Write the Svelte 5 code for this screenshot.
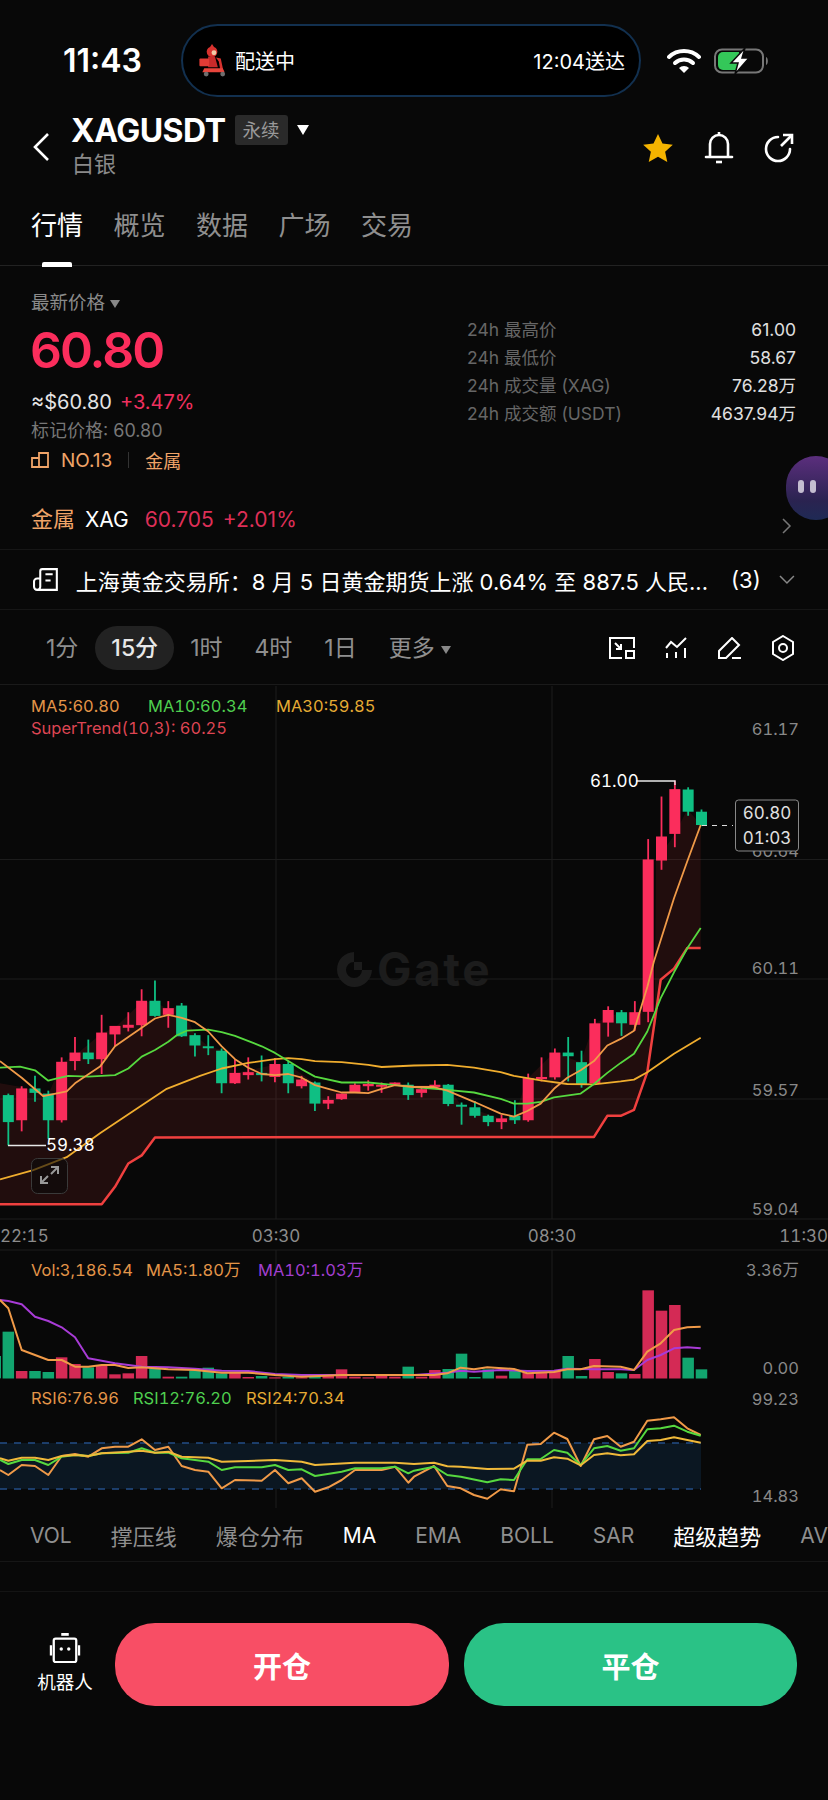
<script>
  const tabs = ['行情', '概览', '数据', '广场', '交易'];
  const stats = [
    ['24h 最高价', '61.00'],
    ['24h 最低价', '58.67'],
    ['24h 成交量 (XAG)', '76.28万'],
    ['24h 成交额 (USDT)', '4637.94万']
  ];
  const intervals = ['1分', '15分', '1时', '4时', '1日'];
  const indicators = [
    ['VOL', 0], ['撑压线', 0], ['爆仓分布', 0], ['MA', 1], ['EMA', 0],
    ['BOLL', 0], ['SAR', 0], ['超级趋势', 1], ['AV', 0]
  ];
  const isCjk = (s) => /[^\x00-\x7f]/.test(s);

  const UP = '#fb2d5c';
  const DOWN = '#0fbf83';

  // values were read off the reference: y in main-chart units, converted below
  const my = (v) => 680 + v / 2.703;
  const sy = (v) => 1240 + v / 3;
  const cx = (i) => 8.33 + 13.33 * i;

  const candles = [
    [0, 1118, 1122, 1195, 1258], [1, 1098, 1104, 1190, 1220], [0, 1070, 1104, 1116, 1140], [0, 1110, 1118, 1190, 1240],
    [1, 1020, 1032, 1190, 1196], [1, 965, 1007, 1030, 1055], [0, 972, 1007, 1025, 1038], [1, 905, 953, 1025, 1065],
    [1, 935, 935, 958, 990], [1, 898, 932, 940, 950], [1, 836, 867, 933, 963], [0, 812, 867, 908, 910],
    [1, 868, 887, 905, 940], [0, 873, 880, 963, 965], [0, 955, 960, 988, 1018], [0, 960, 990, 995, 1014],
    [0, 996, 1002, 1090, 1117], [1, 1025, 1062, 1090, 1092], [1, 1020, 1060, 1068, 1080], [0, 1015, 1062, 1068, 1085],
    [1, 1022, 1038, 1073, 1087], [0, 1030, 1038, 1090, 1117], [1, 1070, 1080, 1098, 1104], [0, 1085, 1088, 1145, 1165],
    [1, 1125, 1135, 1145, 1160], [1, 1118, 1118, 1133, 1135], [1, 1090, 1094, 1115, 1116], [1, 1082, 1092, 1098, 1110],
    [1, 1088, 1094, 1098, 1116], [1, 1088, 1088, 1094, 1096], [0, 1088, 1094, 1122, 1135], [1, 1100, 1106, 1116, 1128],
    [1, 1082, 1094, 1100, 1102], [0, 1092, 1094, 1146, 1152], [0, 1142, 1148, 1150, 1202], [0, 1138, 1155, 1178, 1183],
    [0, 1175, 1178, 1195, 1206], [1, 1175, 1185, 1195, 1214], [0, 1136, 1178, 1190, 1200], [1, 1064, 1076, 1190, 1194],
    [1, 1020, 1073, 1079, 1085], [1, 996, 1007, 1074, 1080], [0, 965, 1007, 1017, 1085], [0, 1002, 1033, 1092, 1102],
    [1, 916, 928, 1090, 1094], [1, 882, 892, 926, 964], [0, 892, 898, 928, 962], [1, 868, 898, 932, 948],
    [1, 430, 485, 897, 925], [1, 315, 423, 488, 513], [1, 272, 295, 416, 452], [0, 290, 296, 356, 367], [0, 350, 356, 392, 395]
  ];

  const volTops = [
    [0, 275], [1, 393], [0, 393], [0, 396], [1, 352], [1, 372], [0, 382], [1, 376], [1, 403], [1, 400], [1, 348],
    [0, 385], [1, 410], [0, 410], [0, 392], [0, 383], [0, 400], [1, 395], [1, 411], [0, 408], [1, 412], [0, 410],
    [1, 412], [0, 408], [1, 404], [1, 388], [1, 410], [1, 412], [1, 404], [1, 410], [0, 380], [1, 410], [1, 390],
    [0, 387], [0, 341], [0, 411], [0, 388], [1, 407], [0, 390], [1, 398], [1, 395], [1, 392], [0, 348], [0, 408],
    [1, 357], [1, 396], [0, 400], [1, 402], [1, 151], [1, 212], [1, 195], [0, 353], [0, 388]
  ];

  // left half points are in zoom x (x/3), right half are offset by 1242
  const R = 1242;
  const r = (pts) => pts.map(([x, y]) => [x + R, y]);
  const path = (pts, toY) => pts.map(([x, y]) => `${(x / 3).toFixed(1)},${toY(y).toFixed(1)}`).join(' ');

  const ma5 = [[0, 1030], [65, 1075], [130, 1125], [200, 1112], [225, 1090], [300, 1045], [345, 990], [385, 965], [425, 940], [465, 915], [505, 905], [545, 913], [585, 925], [625, 950], [665, 990], [705, 1025], [745, 1048], [785, 1065], [825, 1068], [865, 1065], [905, 1075], [945, 1095], [985, 1105], [1025, 1115], [1065, 1115], [1105, 1117], [1145, 1105], [1185, 1095], ...r([[0, 1100], [60, 1100], [100, 1110], [180, 1140], [260, 1172], [300, 1180], [340, 1165], [380, 1145], [420, 1105], [460, 1075], [500, 1055], [540, 1030], [580, 988], [620, 970], [660, 948], [700, 830], [720, 760], [780, 590], [820, 490], [860, 392]])];
  const ma10 = [[0, 1048], [60, 1045], [105, 1055], [145, 1083], [165, 1078], [205, 1070], [265, 1072], [345, 1068], [385, 1050], [425, 1018], [465, 1000], [505, 978], [530, 960], [560, 948], [625, 945], [665, 952], [705, 962], [785, 990], [825, 1008], [865, 1030], [905, 1052], [945, 1072], [1025, 1088], [1105, 1088], [1185, 1095], ...r([[0, 1100], [100, 1108], [180, 1115], [260, 1132], [300, 1145], [340, 1145], [380, 1140], [420, 1128], [500, 1118], [540, 1092], [580, 1062], [620, 1035], [660, 1010], [700, 950], [740, 860], [780, 790], [820, 725], [860, 670]])];
  const ma30 = [[0, 1350], [100, 1325], [200, 1290], [300, 1225], [400, 1165], [500, 1105], [600, 1070], [665, 1050], [745, 1035], [825, 1025], [865, 1022], [905, 1025], [945, 1030], [1025, 1033], [1105, 1040], [1145, 1046], ...r([[0, 1042], [100, 1040], [180, 1048], [260, 1060], [300, 1070], [380, 1082], [460, 1092], [540, 1093], [620, 1085], [660, 1080], [700, 1060], [780, 1010], [860, 967]])];
  const trend = [[0, 1417], [305, 1417], [345, 1370], [385, 1307], [425, 1285], [465, 1237], ...r([[0, 1235], [540, 1235], [580, 1178], [620, 1178], [660, 1162], [700, 1060], [740, 810], [780, 780], [820, 724], [860, 724]])];
  const trendTop = [[0, 1090], [65, 1100], [145, 1120], [185, 1035], [225, 1015], [305, 955], [345, 940], [425, 870], [465, 870], [505, 890], [545, 880], [585, 960], [625, 990], [665, 1000], [705, 1062], [825, 1040], [865, 1040], [945, 1090], [1025, 1118], [1105, 1092], ...r([[0, 1095], [100, 1095], [140, 1148], [260, 1185], [300, 1180], [340, 1078], [420, 1007], [500, 1033], [540, 928], [620, 898], [700, 897], [722, 897], [726, 488], [780, 420], [820, 350], [860, 390]])];
  const trendFill = path([...trendTop, ...[...trend].reverse()], my);

  const volMa5 = [[0, 180], [25, 205], [65, 330], [105, 345], [145, 360], [185, 360], [225, 380], [265, 380], [305, 375], [345, 375], [385, 384], [425, 382], [505, 388], [585, 390], [665, 398], [745, 398], [825, 405], [905, 410], [1025, 405], ...r([[0, 405], [60, 405], [100, 400], [140, 383], [180, 388], [220, 382], [300, 387], [340, 400], [420, 396], [460, 388], [500, 388], [540, 378], [620, 380], [660, 390], [700, 335], [740, 310], [780, 270], [820, 262], [860, 260]])];
  const volMa10 = [[0, 180], [25, 183], [65, 193], [105, 230], [145, 243], [185, 262], [225, 292], [265, 355], [345, 370], [425, 380], [505, 382], [585, 386], [665, 392], [745, 393], [825, 402], [905, 405], ...r([[0, 405], [100, 398], [140, 392], [180, 395], [260, 390], [340, 393], [420, 392], [460, 386], [540, 388], [620, 388], [660, 390], [700, 360], [740, 345], [780, 325], [820, 322], [860, 325]])];

  const rsi6 = [[0, 690], [25, 705], [65, 675], [105, 678], [145, 705], [185, 648], [225, 642], [265, 650], [305, 625], [345, 620], [385, 620], [425, 598], [465, 630], [505, 620], [545, 678], [585, 690], [625, 695], [665, 745], [705, 720], [785, 722], [825, 690], [865, 730], [905, 715], [945, 755], [985, 742], [1025, 720], [1065, 690], [1145, 690], [1185, 680], [1225, 728], ...r([[0, 710], [60, 678], [100, 738], [140, 745], [180, 765], [220, 776], [260, 748], [300, 754], [340, 614], [380, 612], [420, 578], [460, 597], [500, 678], [540, 598], [580, 588], [620, 620], [660, 605], [700, 542], [740, 538], [780, 532], [820, 565], [860, 585]])];
  const rsi12 = [[0, 660], [25, 672], [65, 660], [105, 660], [145, 675], [185, 650], [225, 645], [265, 648], [305, 640], [385, 638], [425, 625], [465, 638], [505, 638], [545, 655], [625, 665], [665, 690], [705, 682], [785, 682], [825, 675], [865, 690], [905, 688], [945, 708], [1025, 695], [1065, 685], [1145, 685], [1185, 680], [1225, 700], ...r([[0, 692], [60, 680], [100, 705], [140, 710], [220, 727], [260, 718], [300, 720], [340, 658], [380, 657], [420, 630], [460, 638], [500, 675], [540, 625], [580, 618], [620, 632], [660, 625], [700, 568], [740, 565], [780, 557], [820, 575], [860, 587]])];
  const rsi24 = [[0, 655], [25, 662], [65, 653], [105, 653], [145, 660], [185, 648], [225, 645], [265, 648], [305, 640], [385, 635], [425, 632], [465, 638], [505, 635], [545, 650], [625, 653], [665, 665], [745, 663], [825, 660], [905, 665], [945, 675], [1065, 668], [1185, 668], ...r([[0, 672], [60, 668], [100, 679], [140, 680], [220, 687], [300, 686], [340, 662], [380, 662], [420, 652], [460, 656], [500, 676], [540, 645], [580, 640], [620, 646], [660, 643], [700, 603], [740, 600], [780, 592], [820, 600], [860, 608]])];

  const priceAxis = [['60.64', 851], ['60.11', 968], ['59.57', 1090], ['59.04', 1209]];
  const hLines = [859.5, 979, 1099, 1219, 1250];
</script>

<div class="page">
  <div class="status">
    <span class="clock">11:43</span>
    <div class="island">
      <svg class="rider" viewBox="0 0 28 34" width="28" height="33">
        <circle cx="13" cy="8" r="5.500" fill="#d8322e" />
        <path d="M13 0l2 3h-4z" fill="#d8322e" />
        <circle cx="15" cy="9" r="2.500" fill="#f1c9a8" />
        <path d="M9 13h7l3 11H9z" fill="#c92a2a" />
        <rect x="0" y="15" width="10" height="8" rx="1" fill="#e23b35" />
        <path d="M17 14l5 1 3 14h-3l-2-11z" fill="#d8322e" />
        <path d="M5 25h19l2 4H3z" fill="#e8453c" />
        <circle cx="7" cy="31" r="2.500" fill="#6e6e6e" />
        <circle cx="24" cy="31" r="2.500" fill="#6e6e6e" />
      </svg>
      <span class="island-l">配送中</span>
      <span class="island-r">12:04送达</span>
    </div>
    <svg class="wifi" viewBox="0 0 34 25" width="34" height="25">
      <path d="M2 9a22 22 0 0 1 30 0" fill="none" stroke="#fff" stroke-width="4" stroke-linecap="round" />
      <path d="M8 15a13 13 0 0 1 18 0" fill="none" stroke="#fff" stroke-width="4" stroke-linecap="round" />
      <path d="M17 25l-5-5a7 7 0 0 1 10 0z" fill="#fff" />
    </svg>
    <svg class="battery" viewBox="0 0 56 26" width="56" height="26">
      <rect x="1" y="1.500" width="48" height="23" rx="7" fill="none" stroke="#777" stroke-width="2" />
      <path d="M4 9a5 5 0 0 1 5-5h16v18H9a5 5 0 0 1-5-5z" fill="#34c759" />
      <path d="M52 9c2.500 1 2.500 7 0 8z" fill="#777" />
      <path d="M31 0L17 15h7l-3 11 14-16h-7z" fill="#fff" stroke="#0a0a0a" stroke-width="1.500" />
    </svg>
  </div>

  <header class="head">
    <svg class="back" viewBox="0 0 18 30" width="18" height="30">
      <path d="M16 2L3 15l13 13" fill="none" stroke="#fff" stroke-width="2.600" />
    </svg>
    <div class="title">
      <div class="title-top">
        <span class="symbol">XAGUSDT</span>
        <span class="tag">永续</span>
        <i class="tri white"></i>
      </div>
      <div class="subtitle">白银</div>
    </div>
    <div class="head-icons">
      <svg viewBox="0 0 34 32" width="32" height="30"><path d="M17 1l4.800 10.200 11 1.300-8.200 7.500 2.300 11L17 25.400 7.100 31l2.300-11L1.200 12.500l11-1.300z" fill="#f5b400" /></svg>
      <svg viewBox="0 0 30 32" width="30" height="32" fill="none" stroke="#fff" stroke-width="2.600"><path d="M6 25V12a9 9 0 0 1 18 0v13" /><path d="M2 25h26" stroke-linecap="round" /><path d="M12 30h6" /><path d="M15 0v3" /></svg>
      <svg viewBox="0 0 30 30" width="30" height="30" fill="none" stroke="#fff" stroke-width="2.600"><path d="M26 16A12 12 0 1 1 14 4" stroke-linecap="round" /><path d="M17 13L28 2" /><path d="M19 2h9v9" /></svg>
    </div>
  </header>

  <nav class="tabs">
    {#each tabs as tab, i}
      <span class="tab" class:on={i === 0}>{tab}</span>
    {/each}
  </nav>

  <section class="summary">
    <div class="sum-top">
      <div class="sum-left">
        <div class="latest">最新价格 <i class="tri grey"></i></div>
        <div class="price">60.80</div>
        <div class="usd"><span>≈$60.80</span><span class="up">+3.47%</span></div>
        <div class="mark">标记价格: 60.80</div>
        <div class="rank">
          <svg viewBox="0 0 18 16" width="18" height="16" fill="none" stroke="#f0a468" stroke-width="1.800"><path d="M1 15V6h7v9zM8 15V1h9v14z" /></svg>
          <span class="no">NO.13</span>
          <i class="sep"></i>
          <span>金属</span>
        </div>
      </div>
      <div class="sum-right">
        {#each stats as [label, val]}
          <div class="stat"><span class="stat-l">{label}</span><span class="stat-v">{val}</span></div>
        {/each}
      </div>
    </div>
    <div class="metal">
      <span class="metal-name">金属</span>
      <span class="metal-sym">XAG</span>
      <span class="metal-val">60.705</span>
      <span class="metal-val pct">+2.01%</span>
      <svg class="metal-go" viewBox="0 0 10 16" width="10" height="16"><path d="M1 1l7 7-7 7" fill="none" stroke="#777" stroke-width="1.500" /></svg>
    </div>
    <div class="bubble"><i></i><i></i></div>
  </section>

  <section class="news">
    <svg viewBox="0 0 24 22" width="25" height="23" fill="none" stroke="#fff" stroke-width="2"><path d="M7 10H4a3 3 0 0 0-3 3v5a3 3 0 0 0 6 0V3a2 2 0 0 1 2-2h14v20H5" /><path d="M12 6h7M12 12h5" /></svg>
    <span class="news-text">上海黄金交易所：8 月 5 日黄金期货上涨 0.64% 至 887.5 人民...</span>
    <span class="news-n">(3)</span>
    <svg viewBox="0 0 16 10" width="16" height="10"><path d="M1 1l7 7 7-7" fill="none" stroke="#888" stroke-width="1.500" /></svg>
  </section>

  <section class="intervals">
    {#each intervals as it, i}
      <span class="itv" class:on={i === 1}>{it}</span>
    {/each}
    <span class="itv more">更多 <i class="tri grey"></i></span>
    <div class="tools">
      <svg viewBox="0 0 26 22" width="26" height="22" fill="none" stroke="#fff" stroke-width="2"><path d="M13 21H1V1h24v10" /><rect x="17" y="14" width="8" height="7" /><path d="M6 6l6 6M12 7v5H7" /></svg>
      <svg viewBox="0 0 22 22" width="22" height="22" fill="none" stroke="#fff" stroke-width="2"><path d="M1 11l5-6 6 5 9-9" /><path d="M2 16v5M11 15v6M20 11v10" /></svg>
      <svg viewBox="0 0 23 22" width="23" height="22" fill="none" stroke="#fff" stroke-width="2"><path d="M8 21H1v-7L14 1l7 7z" /><path d="M14 21h9" /></svg>
      <svg viewBox="0 0 24 26" width="24" height="26" fill="none" stroke="#fff" stroke-width="2"><path d="M12 1l10 6v12l-10 6-10-6V7z" /><circle cx="12" cy="13" r="4" /></svg>
    </div>
  </section>

  <svg class="chart" viewBox="0 685 828 824" width="828" height="824">
    {#each hLines as y}
      <line x1="0" x2="828" y1={y} y2={y} class="grid" />
    {/each}
    <line x1="276" x2="276" y1="686" y2="1219" class="grid" />
    <line x1="552" x2="552" y1="686" y2="1219" class="grid" />
    <line x1="276" x2="276" y1="1250" y2="1508" class="grid" />
    <line x1="552" x2="552" y1="1250" y2="1508" class="grid" />

    <!-- watermark -->
    <g fill="#1c1c1c">
      <path d="M354 952a17.500 17.500 0 1 0 18 18h-10a8 8 0 1 1-8-8z" />
      <rect x="354" y="962" width="8" height="8" />
      <text x="377" y="986" class="mark-text">Gate</text>
    </g>

    <polygon points={trendFill} fill="#ff3b3b" fill-opacity="0.1" />

    {#each candles as [up, wt, bt, bb, wb], i}
      <line x1={cx(i)} x2={cx(i)} y1={my(wt)} y2={my(wb)} stroke={up ? UP : DOWN} stroke-width="1.800" />
      <rect x={cx(i) - 5.500} y={my(bt)} width="11" height={Math.max(my(bb) - my(bt), 2)} fill={up ? UP : DOWN} />
    {/each}

    <polyline points={path(trend, my)} class="ln" stroke="#f0403f" stroke-width="2.500" />
    <polyline points={path(ma30, my)} class="ln" stroke="#f0ad2e" />
    <polyline points={path(ma10, my)} class="ln" stroke="#56d83f" />
    <polyline points={path(ma5, my)} class="ln" stroke="#f09a48" />

    <path d="M8 1145.500h38M636 781h39v4" fill="none" stroke="#e8e8e8" stroke-width="1.300" />
    <text x="46" y="1151" class="tx white-t">59.38</text>
    <text x="590" y="787" class="tx white-t">61.00</text>

    <line x1="702" x2="733" y1="825.500" y2="825.500" stroke="#ddd" stroke-dasharray="5 5" />

    <text x="799" y="735" class="tx axis" text-anchor="end">61.17</text>
    {#each priceAxis as [t, y]}
      <text x="799" y={y + 6} class="tx axis" text-anchor="end">{t}</text>
    {/each}

    <rect x="735.500" y="800" width="63" height="51" rx="3" fill="#0a0a0a" stroke="#888" />
    <text x="767" y="819" class="tx tag-t" text-anchor="middle">60.80</text>
    <text x="767" y="844" class="tx tag-t" text-anchor="middle">01:03</text>

    <!-- legend -->
    <text x="31" y="712" class="tx leg" fill="#e39548">MA5:60.80</text>
    <text x="148" y="712" class="tx leg" fill="#4fcf4f">MA10:60.34</text>
    <text x="276" y="712" class="tx leg" fill="#e5ab34">MA30:59.85</text>
    <text x="31" y="734" class="tx leg" fill="#dd4553">SuperTrend(10,3): 60.25</text>

    <!-- expand button -->
    <rect x="31.500" y="1158.500" width="36" height="35" rx="6" fill="#0a0a0a" fill-opacity="0.6" stroke="#3a3a3a" />
    <path d="M41 1183l7-7M58 1167l-7 7M41 1176v7h7M51 1167h7v7" fill="none" stroke="#999" stroke-width="2" />

    <text x="0" y="1242" class="tx time">22:15</text>
    <text x="276" y="1242" class="tx time" text-anchor="middle">03:30</text>
    <text x="552" y="1242" class="tx time" text-anchor="middle">08:30</text>
    <text x="828" y="1242" class="tx time" text-anchor="end">11:30</text>

    <!-- volume -->
    <rect x="-4" y={sy(348)} width="5" height={sy(415) - sy(348)} fill="#12a56f" />
    {#each volTops as [up, top], i}
      <rect x={cx(i) - 5.750} y={sy(top)} width="11.500" height={sy(415.500) - sy(top)} fill={up ? '#d42a55' : '#12a56f'} />
    {/each}
    <polyline points={path(volMa10, sy)} class="ln" stroke="#a83bd6" stroke-width="2" />
    <polyline points={path(volMa5, sy)} class="ln" stroke="#f09a48" stroke-width="2" />

    <text x="31" y="1276" class="tx leg" fill="#e39548">Vol:3,186.54</text>
    <text x="146" y="1276" class="tx leg" fill="#e39548">MA5:1.80万</text>
    <text x="258" y="1276" class="tx leg" fill="#a23fd0">MA10:1.03万</text>
    <text x="799" y="1276" class="tx axis" text-anchor="end">3.36万</text>
    <text x="799" y="1374" class="tx axis" text-anchor="end">0.00</text>

    <!-- rsi -->
    <rect x="0" y="1443" width="701" height="46" fill="#0b1722" />
    <line x1="0" x2="701" y1="1443" y2="1443" class="band" />
    <line x1="0" x2="701" y1="1489" y2="1489" class="band" />
    <polyline points={path(rsi6, sy)} class="ln" stroke="#f09a48" stroke-width="2" />
    <polyline points={path(rsi12, sy)} class="ln" stroke="#56d83f" stroke-width="2" />
    <polyline points={path(rsi24, sy)} class="ln" stroke="#f0b93a" stroke-width="2" />

    <text x="31" y="1404" class="tx leg" fill="#e39548">RSI6:76.96</text>
    <text x="133" y="1404" class="tx leg" fill="#4fcf4f">RSI12:76.20</text>
    <text x="246" y="1404" class="tx leg" fill="#e5ab34">RSI24:70.34</text>
    <text x="799" y="1405" class="tx axis" text-anchor="end">99.23</text>
    <text x="799" y="1502" class="tx axis" text-anchor="end">14.83</text>
  </svg>

  <div class="indicators">
    {#each indicators as [name, on]}
      <span class="ind" class:on={on} class:cjk={isCjk(name)}>{name}</span>
    {/each}
  </div>

  <div class="spacer"></div>

  <footer class="foot">
    <div class="bot">
      <svg viewBox="0 0 32 32" width="32" height="30" fill="none" stroke="#fff" stroke-width="2.400"><rect x="4" y="6" width="24" height="25" rx="2" /><path d="M12 1.500h8" stroke-width="3" /><path d="M1 13v11M31 13v11" /><circle cx="12" cy="17" r="1.800" fill="#fff" stroke="none" /><circle cx="20" cy="17" r="1.800" fill="#fff" stroke="none" /></svg>
      <span>机器人</span>
    </div>
    <button class="btn open">开仓</button>
    <button class="btn close">平仓</button>
  </footer>
</div>

<style>
  :global(body) {
    margin: 0;
    background: #080808;
  }

  .page {
    width: 828px;
    height: 1800px;
    overflow: hidden;
    background: #080808;
    color: #fff;
    font-family: Inter, "Noto Sans CJK SC", sans-serif;
  }

  .status {
    height: 105px;
    display: flex;
    align-items: flex-start;
    padding-top: 24px;
    box-sizing: border-box;
    position: relative;
  }

  .clock {
    margin: 21px 0 0 63px;
    width: 118px;
    font-size: 32px;
    line-height: 32px;
    font-weight: 600;
  }

  .island {
    width: 460px;
    height: 73px;
    box-sizing: border-box;
    border: 2px solid #12304f;
    border-radius: 37px;
    background: #000;
    display: flex;
    align-items: center;
    padding: 0 14px 0 16px;
    font-size: 20px;
  }

  .rider {
    margin-right: 8px;
  }

  .island-r {
    margin-left: auto;
  }

  .wifi {
    margin: 24px 0 0 26px;
  }

  .battery {
    margin: 24px 0 0 13px;
  }

  .head {
    height: 85px;
    display: flex;
    position: relative;
  }

  .back {
    margin: 27px 0 0 32px;
  }

  .title {
    margin-left: 21px;
  }

  .title-top {
    display: flex;
    align-items: center;
    height: 38px;
    margin-top: 6px;
  }

  .symbol {
    font-size: 32px;
    font-weight: 700;
    letter-spacing: -0.5px;
  }

  .tag {
    margin-left: 9px;
    padding: 0 8px;
    height: 30px;
    line-height: 30px;
    font-size: 18.500px;
    color: #999;
    background: #2a2a2a;
    border-radius: 3px;
  }

  .tri {
    display: inline-block;
    width: 0;
    height: 0;
    border-left: 5.500px solid transparent;
    border-right: 5.500px solid transparent;
    border-top: 8px solid #888;
    vertical-align: middle;
  }

  .tri.white {
    margin-left: 9px;
    border-left-width: 6.500px;
    border-right-width: 6.500px;
    border-top: 10px solid #fff;
  }

  .subtitle {
    font-size: 22px;
    line-height: 30px;
    color: #8a8a8a;
    padding-left: 1px;
  }

  .head-icons {
    margin-left: auto;
    display: flex;
    gap: 30px;
    align-items: center;
    padding: 27px 34px 0 0;
    height: 32px;
  }

  .tabs {
    height: 76px;
    box-sizing: border-box;
    display: flex;
    gap: 30.500px;
    padding: 18px 0 0 31px;
    border-bottom: 1px solid #222;
  }

  .tab {
    position: relative;
    font-size: 26px;
    line-height: 36px;
    color: #8f8f8f;
    height: 58px;
  }

  .tab.on {
    color: #fff;
  }

  .tab.on::after {
    content: "";
    position: absolute;
    left: 11px;
    right: 11px;
    bottom: -1px;
    height: 5px;
    border-radius: 2px 2px 0 0;
    background: #fff;
  }

  .summary {
    position: relative;
    height: 284px;
    box-sizing: border-box;
    border-bottom: 1px solid #161616;
  }

  .sum-top {
    height: 227px;
    display: flex;
    justify-content: space-between;
    padding: 0 32px 0 31px;
  }

  .latest {
    margin-top: 23px;
    font-size: 18.500px;
    line-height: 26px;
    color: #8a8a8a;
  }

  .price {
    margin-top: 5px;
    font-size: 50px;
    line-height: 60px;
    font-weight: 600;
    color: #fb2d5c;
    letter-spacing: -2px;
    margin-left: -1px;
  }

  .usd {
    margin-top: 7px;
    display: flex;
    gap: 8px;
    font-size: 20px;
    line-height: 30px;
    color: #e4e4e4;
  }

  .up {
    color: #f0305f;
  }

  .mark {
    margin-top: 1px;
    font-size: 18px;
    line-height: 26px;
    color: #777;
  }

  .rank {
    margin-top: 1px;
    display: flex;
    align-items: center;
    gap: 12px;
    height: 30px;
    font-size: 18px;
    color: #f0a468;
  }

  .no {
    font-size: 19px;
  }

  .sep {
    width: 1px;
    height: 16px;
    background: #333;
    margin: 0 4px;
  }

  .sum-right {
    width: 329px;
    padding-top: 50px;
  }

  .stat {
    display: flex;
    justify-content: space-between;
    height: 28px;
    line-height: 28px;
    font-size: 17.500px;
  }

  .stat-l {
    color: #666;
  }

  .stat-v {
    color: #e0e0e0;
  }

  .metal {
    height: 53px;
    box-sizing: border-box;
    display: flex;
    align-items: baseline;
    padding: 13px 36px 0 31px;
    line-height: 26px;
    font-size: 21px;
  }

  .metal-name {
    color: #f0a468;
    font-size: 22px;
    margin-right: 10px;
  }

  .metal-sym {
    margin-right: 16px;
  }

  .metal-val {
    color: #dd2f57;
    margin-right: 9px;
  }

  .metal-go {
    margin-left: auto;
    align-self: center;
  }

  .bubble {
    position: absolute;
    left: 786px;
    top: 190px;
    width: 60px;
    height: 64px;
    border-radius: 30px;
    background: linear-gradient(180deg, #5b2e7d, #2a2350 70%, #1f2a55);
    display: flex;
    gap: 6px;
    padding: 24px 0 0 12px;
    box-sizing: border-box;
  }

  .bubble i {
    width: 6px;
    height: 13px;
    border-radius: 3px;
    background: #c4bdd0;
  }

  .news {
    height: 60px;
    box-sizing: border-box;
    display: flex;
    align-items: center;
    padding: 0 33px;
    gap: 18px;
    font-size: 22px;
    border-bottom: 1px solid #161616;
  }

  .news-text {
    white-space: nowrap;
    width: 638px;
    overflow: hidden;
    font-weight: 400;
  }

  .news-n {
    margin-left: 3px;
    width: 30px;
    flex: none;
  }

  .intervals {
    height: 75px;
    box-sizing: border-box;
    display: flex;
    align-items: center;
    padding: 2px 33px 0 31px;
    border-bottom: 1px solid #1a1a1a;
    font-size: 23px;
    color: #8f8f8f;
  }

  .itv {
    height: 44px;
    line-height: 44px;
    padding: 0 15px;
    border-radius: 22px;
    margin-right: 2px;
  }

  .itv.on {
    color: #e8e8e8;
    background: #222;
    font-weight: 500;
    padding: 0 16px;
    margin-right: 1px;
  }

  .tools {
    margin-left: auto;
    display: flex;
    align-items: center;
    gap: 30.500px;
  }

  .chart {
    display: block;
  }

  .grid {
    stroke: #1c1c1c;
    stroke-width: 1;
  }

  .band {
    stroke: #234d86;
    stroke-width: 1.500;
    stroke-dasharray: 7 7;
  }

  .ln {
    fill: none;
    stroke-linejoin: round;
  }

  polyline.ln:not([stroke-width]) {
    stroke-width: 1.800;
  }

  .tx {
    font-family: Inter, "Noto Sans CJK SC", sans-serif;
    font-variant-numeric: tabular-nums;
  }

  .leg {
    font-size: 16.500px;
  }

  .axis {
    font-size: 16.500px;
    fill: #888;
  }

  .white-t {
    font-size: 17px;
    fill: #fff;
  }

  .tag-t {
    font-size: 17px;
    fill: #e0e0e0;
  }

  .time {
    font-size: 17px;
    fill: #8c8c8c;
  }

  .mark-text {
    font-family: Inter, sans-serif;
    font-size: 46px;
    font-weight: 700;
    letter-spacing: 2.500px;
  }

  .indicators {
    height: 53px;
    box-sizing: border-box;
    display: flex;
    gap: 39px;
    align-items: center;
    padding-left: 30px;
    border-bottom: 1px solid #161616;
    white-space: nowrap;
    font-size: 21px;
    color: #8f8f8f;
  }

  .ind {
    flex: none;
  }

  .ind.cjk {
    font-size: 22px;
  }

  .ind.on {
    color: #fff;
  }

  .spacer {
    height: 30px;
    box-sizing: border-box;
    border-bottom: 1px solid #141414;
  }

  .foot {
    display: flex;
    padding-top: 31px;
    align-items: flex-start;
  }

  .bot {
    width: 115px;
    flex: none;
    display: flex;
    flex-direction: column;
    align-items: center;
    font-size: 18.500px;
    padding: 10px 0 0 15px;
    gap: 5px;
    box-sizing: border-box;
  }

  .btn {
    border: 0;
    height: 83px;
    width: 334px;
    border-radius: 40px;
    color: #fff;
    font-family: Inter, "Noto Sans CJK SC", sans-serif;
    font-size: 29px;
    font-weight: 700;
  }

  .open {
    background: #f84e65;
  }

  .close {
    background: #2ac286;
    margin-left: 15px;
    width: 333px;
  }
</style>
